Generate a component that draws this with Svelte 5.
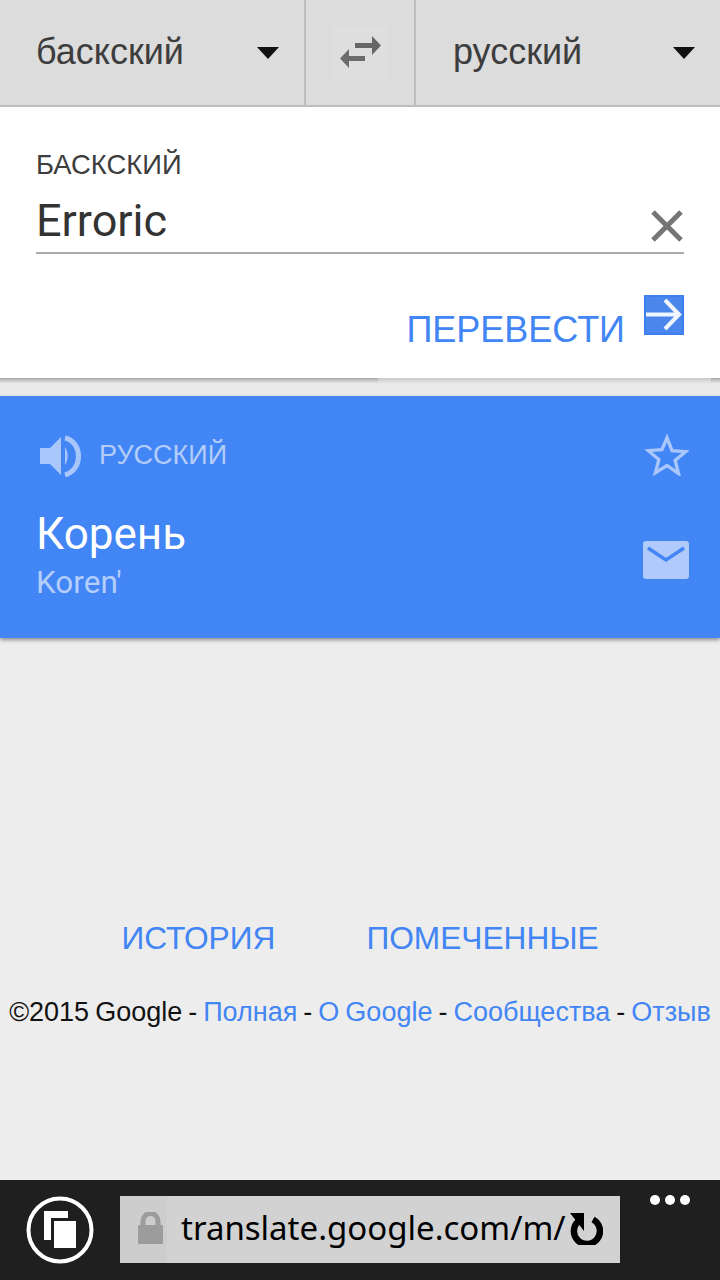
<script>
	const links = ['Полная', 'О Google', 'Сообщества', 'Отзыв'];
</script>

<div class="page">
	<header class="lang-bar">
		<div class="lang lang-left">
			<span>баскский</span>
			<i class="caret"></i>
		</div>
		<div class="swap">
			<svg width="56" height="54" viewBox="0 0 56 54">
				<defs>
					<filter id="soft"><feGaussianBlur stdDeviation="0.6" /></filter>
				</defs>
				<path d="M23 17h17v-7l9 9.500-9 9.500v-7H23z" fill="#666" filter="url(#soft)" />
				<path d="M33 35H17v7l-9-9.500 9-9.500v7h16z" fill="#6c6c6c" filter="url(#soft)" />
			</svg>
		</div>
		<div class="lang lang-right">
			<span>русский</span>
			<i class="caret"></i>
		</div>
	</header>

	<section class="input-card">
		<div class="source-label">БАСКСКИЙ</div>
		<div class="input-row">
			<span class="source-text">Erroric</span>
			<svg class="clear" width="34" height="34" viewBox="0 0 34 34">
				<path d="M3 3l28 28M31 3L3 31" stroke="#757575" stroke-width="5" fill="none" />
			</svg>
		</div>
		<div class="translate-row">
			<span class="translate-label">ПЕРЕВЕСТИ</span>
			<svg class="go" width="40" height="40" viewBox="0 0 40 40">
				<rect width="40" height="40" fill="#3b7ff0" />
				<rect x="2" y="2" width="36" height="36" fill="#4a86ec" />
				<path d="M2 19.500h32M21 5l14 14.500L21 34" stroke="#fff" stroke-width="4" fill="none" opacity=".92" />
			</svg>
		</div>
	</section>

	<div class="card-gap">
		<i class="edge dark-left"></i>
		<i class="edge light"></i>
		<i class="edge dark-right"></i>
	</div>

	<section class="result-card">
		<div class="result-head">
			<svg class="speaker" width="44" height="42" viewBox="0 0 44 42">
				<path d="M1 13h10L22 2v38L11 29H1z" fill="#a9c7fb" />
				<path d="M26 12c3.500 5 3.500 13 0 18z" fill="#a9c7fb" />
				<path d="M26 3c18 4 18 32 0 37" stroke="#a9c7fb" stroke-width="5" fill="none" />
			</svg>
			<span class="target-label">РУССКИЙ</span>
			<svg class="star" width="44" height="42" viewBox="0 0 46 44">
				<path d="M23 4l5.300 13.500 14.200 1-11 9.200 3.600 13.800L23 33l-12.100 7.500 3.600-13.800-11-9.200 14.200-1z" fill="none" stroke="#a9c7fb" stroke-width="3.500" />
			</svg>
		</div>
		<div class="result-body">
			<div>
				<div class="result-text">Корень</div>
				<div class="translit">Koren'</div>
			</div>
			<svg class="mail" width="46" height="38" viewBox="0 0 46 38">
				<rect width="46" height="38" rx="3" fill="#b0cbfb" />
				<path d="M5 7l18 12L41 7" stroke="#4285f4" stroke-width="3.500" fill="none" />
			</svg>
		</div>
	</section>

	<nav class="tabs">
		<span>ИСТОРИЯ</span>
		<span>ПОМЕЧЕННЫЕ</span>
	</nav>

	<footer class="footer">
		©2015 Google
		{#each links as link}
			- <span class="link">{link}</span>{' '}
		{/each}
	</footer>

	<div class="spacer"></div>

	<div class="browser-bar">
		<div class="tabs-button">
			<svg width="68" height="68" viewBox="0 0 68 68">
				<circle cx="34" cy="34" r="31.500" fill="none" stroke="#fff" stroke-width="4" />
				<rect x="18" y="15" width="24" height="29" fill="#fff" />
				<rect x="26.500" y="23.500" width="25" height="30" fill="#fff" stroke="#1f1f1f" stroke-width="3" />
			</svg>
		</div>
		<div class="address">
			<div class="lock-box">
				<svg width="25" height="32" viewBox="0 0 25 32">
					<path d="M5 14V9a7.500 7.500 0 0 1 15 0v5" fill="none" stroke="#9c9c9c" stroke-width="5" />
					<rect y="13" width="25" height="19" rx="1" fill="#9c9c9c" />
				</svg>
			</div>
			<span class="url">translate.google.com/m/</span>
			<svg class="reload" width="34" height="32" viewBox="0 0 34 32">
				<path d="M24 5.500a13 13 0 1 1-13 .500" fill="none" stroke="#000" stroke-width="6.500" transform="translate(0 1)" />
				<path d="M1 0h14v18z" fill="#000" />
			</svg>
		</div>
		<div class="dots"><i></i><i></i><i></i></div>
	</div>
</div>

<style>
	:global(body) {
		margin: 0;
		background: #ececec;
	}

	.page {
		width: 720px;
		height: 1280px;
		display: flex;
		flex-direction: column;
		background: #ededed;
		font-family: "Liberation Sans", Arial, sans-serif;
		overflow: hidden;
	}

	.lang-bar {
		height: 105px;
		flex: none;
		display: flex;
		background: #dcdcdc;
		border-bottom: 2px solid #bdbdbd;
		color: #3d3d3d;
		font-size: 36px;
	}

	.lang {
		display: flex;
		align-items: center;
		justify-content: space-between;
		box-sizing: border-box;
		padding-bottom: 1px;
	}

	.lang-left {
		width: 304px;
		padding-left: 36px;
		padding-right: 25px;
	}

	.lang-right {
		flex: 1;
		padding-left: 37px;
		padding-right: 25px;
	}

	.caret {
		width: 0;
		height: 0;
		margin-top: 1px;
		border-left: 11px solid transparent;
		border-right: 11px solid transparent;
		border-top: 12px solid #111;
	}

	.swap {
		width: 108px;
		flex: none;
		display: flex;
		align-items: center;
		justify-content: center;
		border-left: 2px solid #bdbdbd;
		border-right: 2px solid #bdbdbd;
	}

	.swap svg {
		background: #dedede;
	}

	.input-card {
		height: 271px;
		flex: none;
		box-sizing: border-box;
		padding: 43px 36px 0;
		background: #fff;
	}

	.source-label {
		font-size: 27.400px;
		line-height: 30px;
		color: #3d3d3d;
	}

	.input-row {
		height: 72px;
		display: flex;
		justify-content: space-between;
		align-items: flex-start;
		border-bottom: 2px solid #aaa;
	}

	.source-text {
		font-family: Roboto, sans-serif;
		font-size: 45px;
		line-height: 52px;
		margin-top: 15px;
		color: #333;
	}

	.clear {
		margin-top: 29px;
	}

	.translate-row {
		display: flex;
		justify-content: flex-end;
		align-items: flex-start;
		gap: 19px;
		margin-top: 41px;
	}

	.translate-label {
		font-size: 36px;
		line-height: 42px;
		margin-top: 14px;
		color: #4285f4;
	}

	.card-gap {
		height: 18px;
		flex: none;
		display: flex;
		align-items: flex-start;
		background: linear-gradient(#e8e8e8, #ececec);
	}

	.edge {
		height: 5px;
	}

	.dark-left {
		width: 378px;
		background: linear-gradient(#a8a8a8, #e4e4e4);
	}

	.light {
		flex: 1;
		background: linear-gradient(#c8c8c8, #e6e6e6);
	}

	.dark-right {
		width: 9px;
		background: linear-gradient(#a8a8a8, #e4e4e4);
	}

	.result-card {
		height: 242px;
		flex: none;
		box-sizing: border-box;
		padding: 38px 26px 0 36px;
		background: #4285f4;
		box-shadow: 0 2px 4px rgba(0, 0, 0, 0.4);
	}

	.result-head {
		display: flex;
		align-items: center;
		height: 42px;
	}

	.speaker {
		margin-left: 3px;
		margin-top: 2px;
	}

	.target-label {
		margin-left: 16px;
		font-size: 27px;
		color: #b3cefb;
	}

	.star {
		margin-left: auto;
		margin-right: 5px;
	}

	.result-body {
		display: flex;
		justify-content: space-between;
		align-items: flex-start;
		margin-top: 33px;
	}

	.result-text {
		font-family: Roboto, sans-serif;
		font-size: 44px;
		line-height: 50px;
		color: #fff;
	}

	.translit {
		margin-top: 5px;
		font-family: Roboto, sans-serif;
		font-size: 31.500px;
		line-height: 38px;
		color: #b3cefb;
	}

	.mail {
		margin-top: 32px;
		margin-right: 5px;
	}

	.tabs {
		margin-top: 280px;
		display: flex;
		justify-content: center;
		gap: 91px;
		font-size: 31.700px;
		line-height: 40px;
		color: #4285f4;
		flex: none;
	}

	.footer {
		margin-top: 38px;
		text-align: center;
		font-size: 27px;
		line-height: 32px;
		word-spacing: -1.500px;
		color: #111;
		white-space: nowrap;
		flex: none;
	}

	.link {
		color: #4285f4;
	}

	.spacer {
		flex: 1;
	}

	.browser-bar {
		height: 100px;
		flex: none;
		display: flex;
		align-items: flex-start;
		background: #1f1f1f;
	}

	.tabs-button {
		width: 120px;
		flex: none;
		padding: 16px 0 0 26px;
		box-sizing: border-box;
	}

	.address {
		width: 500px;
		height: 67px;
		margin-top: 16px;
		flex: none;
		display: flex;
		align-items: center;
		box-sizing: border-box;
		background: #d2d2d2;
	}

	.lock-box {
		width: 47px;
		height: 67px;
		flex: none;
		display: flex;
		align-items: center;
		padding: 0 0 3px 18px;
		box-sizing: border-box;
		background: #cdcdcd;
	}

	.url {
		margin-left: 14px;
		padding-bottom: 4px;
		font-family: "Noto Sans", sans-serif;
		font-size: 33px;
		color: #000;
		white-space: nowrap;
	}

	.reload {
		margin-left: 3px;
		margin-bottom: 2px;
		flex: none;
	}

	.dots {
		display: flex;
		gap: 5px;
		margin: 15px 0 0 30px;
	}

	.dots i {
		width: 10px;
		height: 10px;
		border-radius: 50%;
		background: #fff;
	}
</style>
